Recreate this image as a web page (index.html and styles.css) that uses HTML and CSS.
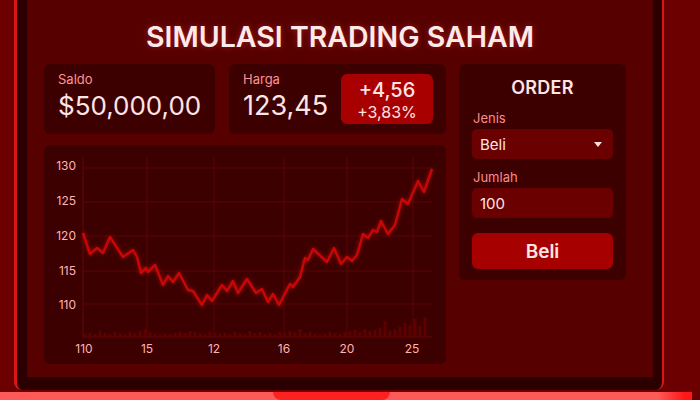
FILE: index.html
```html
<!DOCTYPE html>
<html lang="id">
<head>
  <meta charset="UTF-8">
  <meta name="viewport" content="width=device-width, initial-scale=1.0">
  <title>Simulasi Trading Saham</title>
  <link rel="stylesheet" href="styles.css">
</head>
<body>

  <div class="laptop">
    <!-- Layar laptop -->
    <div class="lid">
      <div class="screen">
        <h1 class="title">SIMULASI TRADING SAHAM</h1>

        <div class="dashboard">
          <div class="main-col">
            <div class="stats">
              <div class="card stat saldo">
                <span class="label">Saldo</span>
                <span class="value">$50,000,00</span>
              </div>
              <div class="card stat harga">
                <div>
                  <span class="label">Harga</span>
                  <span class="value">123,45</span>
                </div>
                <div class="change">
                  <span class="change-abs">+4,56</span>
                  <span class="change-pct">+3,83%</span>
                </div>
              </div>
            </div>

            <!-- Grafik harga -->
            <div class="card chart">
              <svg width="402" height="219" viewBox="44 145 402 219">
                <g class="grid">
                  <path d="M83 168H432M83 202H432M83 236H432M83 271H432M83 304H432"/>
                  <path d="M147 157V337M214 157V337M284 157V337M347 157V337M413 157V337"/>
                  <path class="axis" d="M83 157V337H432"/>
                </g>
                <g class="y-labels">
                  <text x="76" y="170">130</text>
                  <text x="76" y="205">125</text>
                  <text x="76" y="240">120</text>
                  <text x="76" y="275">115</text>
                  <text x="76" y="309">110</text>
                </g>
                <g class="x-labels">
                  <text x="84" y="353">110</text>
                  <text x="147" y="353">15</text>
                  <text x="214" y="353">12</text>
                  <text x="284" y="353">16</text>
                  <text x="347" y="353">20</text>
                  <text x="412" y="353">25</text>
                </g>
                <path class="volume" d="M85 337v-3M90 337v-4M95 337v-3M100 337v-6M105 337v-4M110 337v-3M115 337v-5M120 337v-4M125 337v-3M130 337v-5M135 337v-4M140 337v-6M145 337v-8M150 337v-5M155 337v-4M160 337v-3M165 337v-4M170 337v-3M175 337v-4M180 337v-5M185 337v-4M190 337v-6M195 337v-5M200 337v-4M205 337v-3M210 337v-5M215 337v-4M220 337v-3M225 337v-4M230 337v-3M235 337v-5M240 337v-4M245 337v-3M250 337v-6M255 337v-4M260 337v-5M265 337v-3M270 337v-4M275 337v-3M280 337v-5M285 337v-4M290 337v-6M295 337v-5M300 337v-8M305 337v-4M310 337v-5M315 337v-4M320 337v-3M325 337v-4M330 337v-5M335 337v-4M340 337v-3M345 337v-5M350 337v-6M355 337v-7M360 337v-5M365 337v-8M370 337v-6M375 337v-7M380 337v-9M385 337v-16M390 337v-6M395 337v-8M400 337v-10M405 337v-14M410 337v-12M415 337v-18M420 337v-11M425 337v-20"/>
                <polyline class="price" points="83,233 90,254 97,248 103,253 110,237 123,257 133,250 137,257 141,273 146,268 148,272 155,265 163,285 168,276 173,282 179,273 188,290 193,291 202,305 207,295 212,301 222,285 227,291 233,281 238,293 247,279 256,293 262,289 268,302 273,294 279,305 290,284 293,287 300,277 305,258 308,260 313,249 327,262 334,248 341,264 347,257 352,261 357,255 363,234 368,238 373,230 377,232 381,221 388,234 395,225 402,199 408,204 418,181 424,192 432,169"/>
              </svg>
            </div>
          </div>

          <!-- Panel order -->
          <div class="card order">
            <h2 class="order-title">ORDER</h2>
            <label class="field-label">Jenis</label>
            <div class="field select">
              <span>Beli</span>
              <span class="caret"></span>
            </div>
            <label class="field-label">Jumlah</label>
            <div class="field">100</div>
            <button class="buy-btn">Beli</button>
          </div>
        </div>
      </div>
    </div>

    <!-- Alas laptop -->
    <div class="base">
      <div class="notch"></div>
    </div>
  </div>

</body>
</html>
```

FILE: styles.css
```css
/* Dasar */
body {
  margin: 0;
  width: 700px;
  height: 400px;
  overflow: hidden;
  background: #6c0000;
  font-family: 'Inter', 'Noto Sans', sans-serif;
  color: #ffe2e2;
}

.laptop {
  display: flex;
  flex-direction: column;
}

/* Layar */
.lid {
  margin-left: 14px;
  width: 626px;
  height: 377px;
  padding: 0 9px 13px 10px;
  background: #2c0000;
  border-left: 3px solid #d81818;
  border-right: 2px solid #d81818;
  border-radius: 0 0 8px 8px;
}

.screen {
  height: 377px;
  background: #560000;
  padding: 0 17px;
  box-sizing: border-box;
}

.title {
  margin: 0 0 10px;
  padding-top: 20px;
  text-align: center;
  font-size: 28.5px;
  font-weight: 600;
  line-height: 34px;
  color: #ffeaea;
  text-shadow: 0 0 6px rgba(255, 60, 60, 0.45);
}

.dashboard {
  display: flex;
  gap: 13px;
}

.main-col {
  width: 402px;
  display: flex;
  flex-direction: column;
  gap: 11px;
}

.stats {
  display: flex;
  gap: 14px;
}

.card {
  background: #3c0000;
  border-radius: 6px;
  box-sizing: border-box;
}

.stat {
  height: 70px;
  padding: 7px 14px;
}

.saldo {
  width: 171px;
}

.saldo .value {
  font-size: 26px;
}

.harga {
  width: 217px;
  display: flex;
  justify-content: space-between;
  align-items: center;
  padding-right: 13px;
}

.harga > div:first-child {
  align-self: flex-start;
}

.label {
  display: block;
  font-size: 13px;
  line-height: 17px;
  color: #ff9494;
}

.value {
  display: block;
  font-size: 27px;
  line-height: 36px;
  color: #ffe4e4;
  white-space: nowrap;
}

.change {
  width: 92px;
  height: 50px;
  padding-top: 3px;
  box-sizing: border-box;
  background: #a80000;
  border-radius: 6px;
  display: flex;
  flex-direction: column;
  align-items: center;
  justify-content: center;
  color: #ffe4e4;
}

.change-abs {
  font-size: 20px;
  font-weight: 500;
  line-height: 23px;
}

.change-pct {
  font-size: 16px;
  line-height: 21px;
}

/* Grafik */
.chart {
  height: 219px;
  overflow: hidden;
}

.chart svg {
  display: block;
}

.grid path {
  fill: none;
  stroke: #5a0505;
  stroke-width: 1;
}

.grid .axis {
  stroke: #620808;
}

.y-labels text,
.x-labels text {
  font-family: 'Inter', sans-serif;
  font-size: 12px;
  fill: #ffb4b4;
}

.y-labels text {
  text-anchor: end;
}

.x-labels text {
  text-anchor: middle;
}

.volume {
  fill: none;
  stroke: #5e0000;
  stroke-width: 3;
}

.price {
  fill: none;
  stroke: #c80606;
  stroke-width: 2.5;
  stroke-linejoin: round;
  filter: drop-shadow(0 0 2px rgba(255, 20, 20, 0.5));
}

/* Order */
.order {
  width: 167px;
  height: 216px;
  padding: 10px 13px 0;
  display: flex;
  flex-direction: column;
}

.order-title {
  margin: 0 0 8px;
  text-align: center;
  font-size: 18px;
  font-weight: 600;
  line-height: 28px;
  color: #ffe4e4;
  letter-spacing: 0.3px;
}

.field-label {
  font-size: 13px;
  line-height: 17px;
  color: #ff8a8a;
  padding-left: 1px;
  margin-bottom: 2px;
}

.field {
  height: 30px;
  flex-shrink: 0;
  background: #6a0000;
  border-radius: 5px;
  padding: 0 8px;
  display: flex;
  align-items: center;
  font-size: 15px;
  color: #ffe4e4;
  margin-bottom: 10px;
}

.select {
  justify-content: space-between;
}

.caret {
  width: 0;
  height: 0;
  border-left: 4px solid transparent;
  border-right: 4px solid transparent;
  border-top: 5px solid #ffdede;
  margin-right: 3px;
}

.buy-btn {
  margin-top: 5px;
  height: 36px;
  flex-shrink: 0;
  border: none;
  border-radius: 6px;
  background: #a60000;
  color: #ffe4e4;
  font-family: inherit;
  font-size: 19px;
  font-weight: 600;
  cursor: pointer;
}

/* Alas */
.base {
  margin-top: 2px;
  width: 692px;
  height: 8px;
  background: linear-gradient(to right, #ff5a5a 0, #ff5a5a 95%, #ff1616 99%);
  display: flex;
}

.notch {
  margin-left: 273px;
  width: 117px;
  height: 8px;
  background: #ff2020;
  border-radius: 0 0 10px 10px;
}
```
